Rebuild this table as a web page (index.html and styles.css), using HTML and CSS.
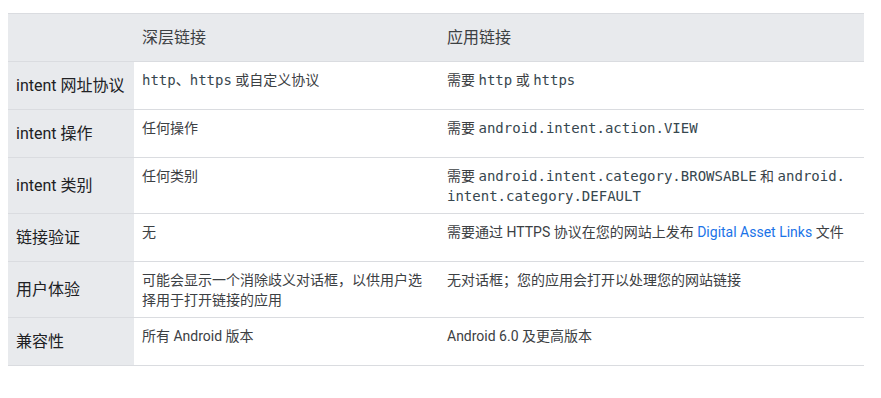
FILE: index.html
```html
<!DOCTYPE html>
<html lang="zh-CN">
<head>
<meta charset="utf-8">
<link rel="stylesheet" href="styles.css">
</head>
<body>
<table class="cmp">
  <colgroup>
    <col class="c1"><col class="c2"><col class="c3">
  </colgroup>
  <thead>
    <tr><th></th><th>深层链接</th><th>应用链接</th></tr>
  </thead>
  <tbody>
    <tr>
      <th>intent 网址协议</th>
      <td><code>http</code>、<code>https</code> 或自定义协议</td>
      <td>需要 <code>http</code> 或 <code>https</code></td>
    </tr>
    <tr>
      <th>intent 操作</th>
      <td>任何操作</td>
      <td>需要 <code>android.intent.action.VIEW</code></td>
    </tr>
    <tr>
      <th>intent 类别</th>
      <td>任何类别</td>
      <td>需要 <code>android.intent.category.BROWSABLE</code> 和 <code>android.<br>intent.category.DEFAULT</code></td>
    </tr>
    <tr>
      <th>链接验证</th>
      <td>无</td>
      <td>需要通过 HTTPS 协议在您的网站上发布 <a href="#">Digital Asset Links</a> 文件</td>
    </tr>
    <tr>
      <th>用户体验</th>
      <td>可能会显示一个消除歧义对话框，以供用户选择用于打开链接的应用</td>
      <td>无对话框；您的应用会打开以处理您的网站链接</td>
    </tr>
    <tr>
      <th>兼容性</th>
      <td>所有 Android 版本</td>
      <td>Android 6.0 及更高版本</td>
    </tr>
  </tbody>
</table>
</body>
</html>
```

FILE: styles.css
```css
body {
  margin: 8px;
  background: #fff;
  font-family: Roboto, "Noto Sans CJK SC", sans-serif;
  color: #3c4043;
}
.cmp {
  margin-top: 5px;
  width: 856px;
  table-layout: fixed;
  border-collapse: collapse;
  border-top: 1px solid #dadce0;
}
.c1 { width: 126px; }
.c2 { width: 305px; }
.c3 { width: 425px; }
.cmp thead th {
  background: #e8eaed;
  font-weight: 400;
  font-size: 16px;
  line-height: 23px;
  padding: 12px 8px;
  text-align: left;
  color: #3c4043;
  border-bottom: 1px solid #dadce0;
}
.cmp tbody th {
  background: #e8eaed;
  font-weight: 400;
  font-size: 16px;
  line-height: 23px;
  padding: 12px 8px;
  text-align: left;
  vertical-align: middle;
  color: #202124;
  border-bottom: 1px solid #dadce0;
}
.cmp td {
  font-size: 14px;
  line-height: 20px;
  padding: 8px 8px 7px;
  vertical-align: top;
  border-bottom: 1px solid #dadce0;
}
.cmp code {
  font-family: "DejaVu Sans Mono", monospace;
  font-size: 14px;
  line-height: 1;
  color: #37474f;
}
.cmp a {
  color: #1a73e8;
  text-decoration: none;
}
```
